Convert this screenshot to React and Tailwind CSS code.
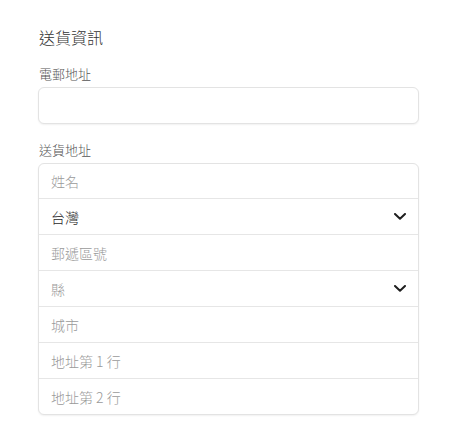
import React from "react";

const font = { fontFamily: '"Noto Sans CJK TC", "Noto Sans", sans-serif' };

function Chevron() {
  return (
    <svg width="12" height="7" viewBox="0 0 12 7" className="shrink-0">
      <polyline points="1,1 6,5.8 11,1" fill="none" stroke="#1f1f1f" strokeWidth="2" strokeLinecap="round" strokeLinejoin="round" />
    </svg>
  );
}

function Row({ text, placeholder, select, first }) {
  return (
    <div
      className={
        "flex items-center justify-between pl-[12px] pr-[12px] " +
        (first ? "h-[34px]" : "h-[36px] border-t border-[#e6e6e6]")
      }
    >
      <span className={"text-[14px] leading-[20px] font-light " + (placeholder ? "text-[#9a9a9a]" : "text-[#1f1f1f]")}>
        {text}
      </span>
      {select && <Chevron />}
    </div>
  );
}

export default function App() {
  return (
    <div className="min-h-[434px] w-[454px] bg-white font-light" style={font}>
      <div className="pl-[38px] pt-[25px] w-[419px]">
        <div className="text-[16px] leading-[24px] text-[#333] pl-px">送貨資訊</div>
        <div className="mt-[15px] text-[13px] leading-[20px] text-[#555] pl-px">電郵地址</div>
        <div className="mt-[3px] h-[37px] rounded-[6px] border border-[#e3e3e3] bg-white shadow-[0_1px_2px_rgba(0,0,0,0.06)]" />
        <div className="mt-[16px] text-[13px] leading-[20px] text-[#555] pl-px">送貨地址</div>
        <div className="mt-[3px] rounded-[6px] border border-[#e3e3e3] bg-white shadow-[0_1px_2px_rgba(0,0,0,0.06)]">
          <Row first placeholder text="姓名" />
          <Row text="台灣" select />
          <Row placeholder text="郵遞區號" />
          <Row placeholder text="縣" select />
          <Row placeholder text="城市" />
          <Row placeholder text="地址第 1 行" />
          <Row placeholder text="地址第 2 行" />
        </div>
      </div>
    </div>
  );
}
